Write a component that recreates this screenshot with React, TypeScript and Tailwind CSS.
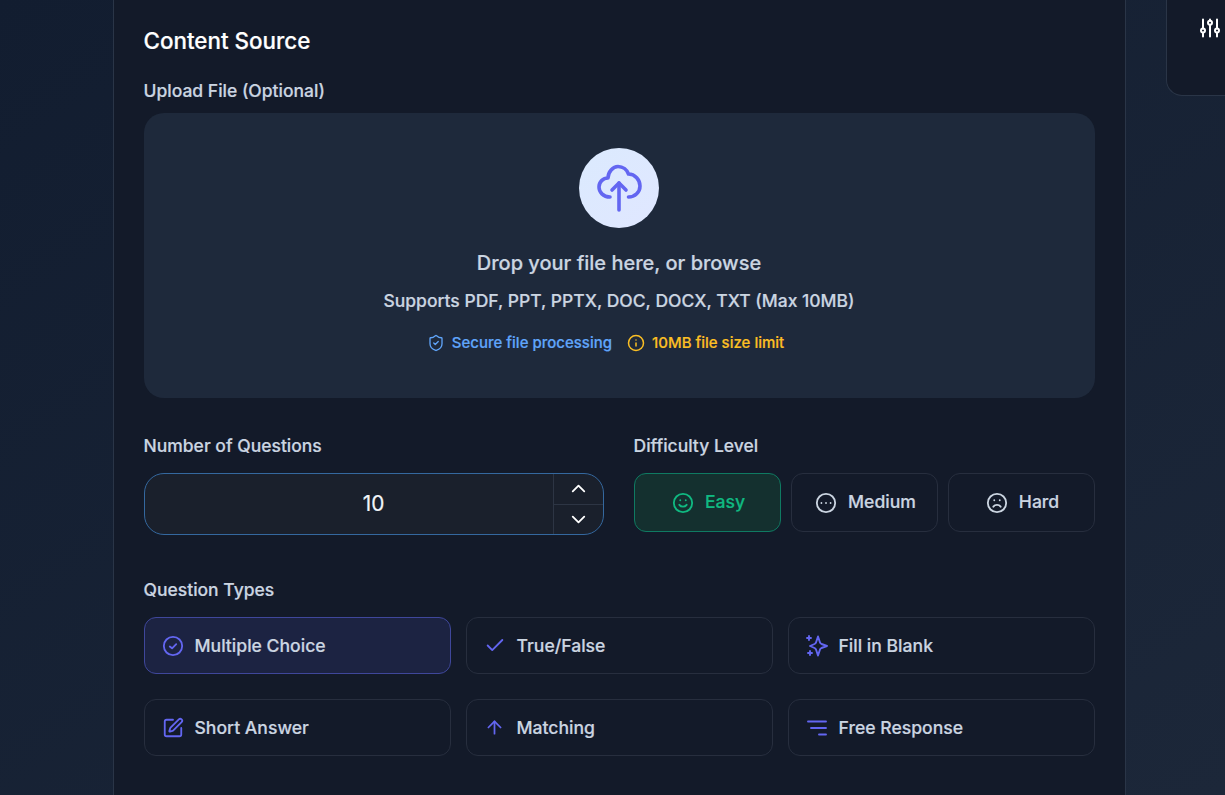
import {
  Check,
  ChevronDown,
  ChevronUp,
  CircleEllipsis,
  Frown,
  Info,
  ArrowUp,
  ShieldCheck,
  Smile,
  SquarePen,
} from "lucide-react";
import type { ReactNode } from "react";

function CloudUp() {
  return (
    <svg viewBox="0 0 48 48" className="h-12 w-12" fill="none" stroke="#6366f1" strokeWidth="3.6" strokeLinecap="round" strokeLinejoin="round">
      <path d="M15 33C8 33 4 28 4 23C4 18 8 14 13 14C13 8 18 2.5 23 2.5C28 2.5 32 6 33.5 10C40 10 45 16 45 22C45 28 40 33 33.5 33" />
      <path d="M24 46V19" />
      <path d="M17 26L24 19L31 26" />
    </svg>
  );
}

function CheckCircleSmall() {
  return (
    <svg viewBox="0 0 24 24" className="h-[22px] w-[22px]" fill="none" stroke="#6366f1" strokeWidth="2" strokeLinecap="round" strokeLinejoin="round">
      <circle cx="12" cy="12" r="10" />
      <path d="m8.5 12.5 2.5 2 4.5-4.5" />
    </svg>
  );
}

function Star() {
  return (
    <svg viewBox="0 0 22 22" className="h-[22px] w-[22px]" fill="none" stroke="#6366f1" strokeWidth="1.9" strokeLinecap="round" strokeLinejoin="round">
      <path d="M12 1.5L14 7.5Q14.5 8.5 15.5 9L21 11L15.5 13Q14.5 13.5 14 14.5L12 20.5L10 14.5Q9.5 13.5 8.5 13L4 11L8.5 9Q9.5 8.5 10 7.5Z" />
      <path d="M3 1v4M1 3h4M4 16v4M2 18h4" />
    </svg>
  );
}

function Lines() {
  return (
    <svg viewBox="0 0 22 18" className="h-[18px] w-[22px]" fill="none" stroke="#6366f1" strokeWidth="1.9" strokeLinecap="round">
      <path d="M2 2.5h18M5 9h15M13 15.5h7" />
    </svg>
  );
}

function Sliders() {
  return (
    <svg viewBox="0 0 20 20" className="h-5 w-5" fill="none" stroke="white" strokeWidth="2" strokeLinecap="round">
      <path d="M3 1.5v9M3 15v3.5M10 1.5v1M10 7v11.5M17 1.5v9M17 15v3.5" />
      <circle cx="3" cy="12.5" r="2" />
      <circle cx="10" cy="4.7" r="2" />
      <circle cx="17" cy="12.5" r="2" />
    </svg>
  );
}

function TypeCard({ icon, label, active }: { icon: ReactNode; label: string; active?: boolean }) {
  return (
    <div
      className={`flex h-[57px] items-center gap-[11px] rounded-xl border pl-[17px] text-[17.6px] font-medium text-[#cbd5e1] ${
        active ? "border-[#3f479b] bg-[#1c2342]" : "border-[#272e3e] bg-[#131a29]"
      }`}
    >
      <span className="flex w-[22px] justify-center">{icon}</span>
      <span className="pt-[2px]">{label}</span>
    </div>
  );
}

function Level({ icon, label, active }: { icon: ReactNode; label: string; active?: boolean }) {
  return (
    <div
      className={`flex h-[59px] flex-1 items-center justify-center gap-[11px] rounded-xl border pl-[3px] text-[17.6px] font-medium ${
        active ? "border-[#0f7a62] bg-[#14302f] text-[#10b981]" : "border-[#272e3e] text-[#cbd5e1]"
      }`}
    >
      {icon}
      {label}
    </div>
  );
}

export default function App() {
  return (
    <div className="flex h-[795px] w-[1225px] overflow-hidden bg-gradient-to-br from-[#121d30] to-[#1c2739] font-['Inter',sans-serif] [-webkit-text-stroke:0.2px]">
      <main className="ml-[113px] h-[795px] w-[1013px] shrink-0 border-x border-[#2a3547] bg-[#131a29] pr-[30.5px] pl-[29.5px] pt-[26px]">
        <h2 className="text-[22.4px] leading-[30px] font-medium text-white">Content Source</h2>
        <p className="mt-[22px] text-[17.5px] leading-[26px] font-medium text-[#cbd5e1]">Upload File (Optional)</p>

        <section className="mt-[9px] flex h-[285px] flex-col items-center rounded-[20px] bg-[#1e293b] pt-[35px]">
          <div className="flex h-20 w-20 items-center justify-center rounded-full bg-gradient-to-br from-[#dbeafe] to-[#e0e7ff]">
            <CloudUp />
          </div>
          <p className="mt-[21px] text-[20px] leading-[28px] font-medium text-[#cbd5e1]">Drop your file here, or browse</p>
          <p className="mt-[12px] text-[17.5px] leading-[24px] font-medium text-[#cbd5e1]">Supports PDF, PPT, PPTX, DOC, DOCX, TXT (Max 10MB)</p>
          <div className="mt-[20px] flex items-center gap-[15px] pr-[27px] text-[15px] leading-[20px] font-medium">
            <span className="flex items-center gap-[7px] text-[#60a5fa]">
              <ShieldCheck size={18} strokeWidth={1.75} />
              Secure file processing
            </span>
            <span className="flex items-center gap-[7px] text-[#fbbf24]">
              <Info size={18} strokeWidth={2} />
              10MB file size limit
            </span>
          </div>
        </section>

        <div className="mt-[35px] grid grid-cols-[460px_461px] gap-x-[30px]">
          <div>
            <p className="text-[17.5px] leading-[26px] font-medium text-[#cbd5e1]">Number of Questions</p>
            <div className="mt-[14px] flex h-[62px] rounded-[20px] border border-[#34689f] bg-[#1a202c]">
              <div className="flex flex-1 items-center justify-center pl-[50px] text-[20.8px] font-normal text-[#f1f5f9]">10</div>
              <div className="flex w-[50px] flex-col border-l border-[#2d3544] text-white">
                <span className="flex flex-1 items-center justify-center border-b border-[#2d3544]">
                  <ChevronUp size={23} strokeWidth={1.9} />
                </span>
                <span className="flex flex-1 items-center justify-center">
                  <ChevronDown size={23} strokeWidth={1.9} />
                </span>
              </div>
            </div>
          </div>
          <div>
            <p className="text-[17.5px] leading-[26px] font-medium text-[#cbd5e1]">Difficulty Level</p>
            <div className="mt-[14px] flex gap-[10px]">
              <Level active icon={<Smile size={22} strokeWidth={2} />} label="Easy" />
              <Level icon={<CircleEllipsis size={22} strokeWidth={2} />} label="Medium" />
              <Level icon={<Frown size={22} strokeWidth={2} />} label="Hard" />
            </div>
          </div>
        </div>

        <p className="mt-[42px] text-[17.5px] leading-[26px] font-medium text-[#cbd5e1]">Question Types</p>
        <div className="mt-[14px] grid grid-cols-3 gap-x-[15px] gap-y-[25px]">
          <TypeCard active icon={<CheckCircleSmall />} label="Multiple Choice" />
          <TypeCard icon={<Check size={23} color="#6366f1" strokeWidth={2} />} label="True/False" />
          <TypeCard icon={<Star />} label="Fill in Blank" />
          <TypeCard icon={<SquarePen size={22} color="#6366f1" strokeWidth={2} />} label="Short Answer" />
          <TypeCard icon={<ArrowUp size={21} color="#6366f1" strokeWidth={2} />} label="Matching" />
          <TypeCard icon={<Lines />} label="Free Response" />
        </div>
      </main>

      <aside className="ml-[40px] h-[96px] w-[80px] shrink-0 rounded-bl-[16px] border-b border-l border-[#2a3547] bg-[#131a29] pt-[18px] pl-[33px]">
        <Sliders />
      </aside>
    </div>
  );
}
